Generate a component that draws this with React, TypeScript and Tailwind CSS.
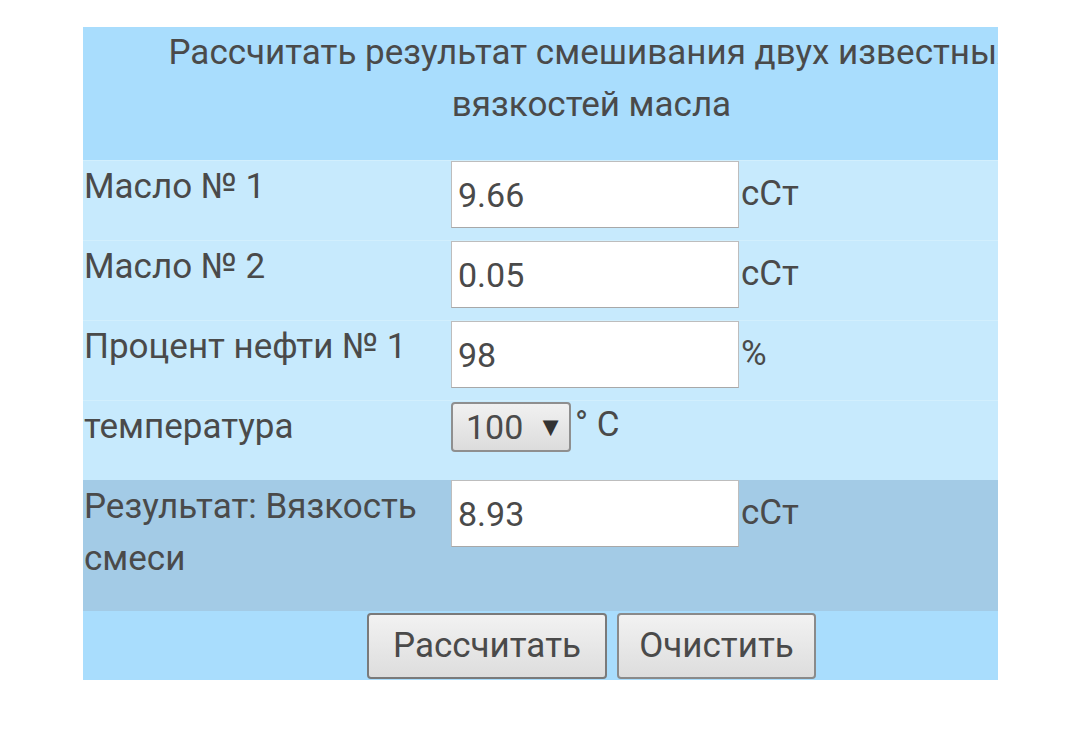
import { useState } from 'react';

const rows = [
  { label: 'Масло № 1', value: '9.66', unit: 'сСт' },
  { label: 'Масло № 2', value: '0.05', unit: 'сСт' },
  { label: 'Процент нефти № 1', value: '98', unit: '%' },
];

const App = () => {
  const [values, setValues] = useState(rows.map((r) => r.value));
  const [result, setResult] = useState('8.93');

  const handleClear = () => {
    setValues(['', '', '']);
    setResult('');
  };

  return (
    <div className="min-h-[730px] bg-white pt-[27px] pl-[83px] text-[#4a4a4a] font-['Roboto','Noto_Sans',sans-serif]">
      <div className="w-[915px] overflow-hidden">
        <div className="w-[1017px]">
          {/* title (wider than the visible box, clipped on the right like the original) */}
          <div className="bg-[#a9ddfd] h-[133px] text-center text-[35px] leading-[52px] whitespace-nowrap">
            Рассчитать результат смешивания двух известных
            <br />
            вязкостей масла
          </div>

          {rows.map((r, i) => (
            <div key={r.label} className="grid grid-cols-[368px_289px_1fr] h-[80px] bg-[#c7eafd] border-t border-[#d2effd] first:border-t-0">
              <div className="text-[35px] leading-[52px] pl-[1px]">{r.label}</div>
              <div>
                <input
                  value={values[i]}
                  onChange={(e) => {
                    const next = [...values];
                    next[i] = e.target.value;
                    setValues(next);
                  }}
                  className="w-[288px] h-[67px] bg-white border border-[#bdbdbd] border-b-[#a8a8a8] px-[6px] text-[34px] text-[#4a4a4a] outline-none"
                />
              </div>
              <div className="text-[35px] leading-[66px] pl-[1px]">{r.unit}</div>
            </div>
          ))}

          <div className="grid grid-cols-[368px_1fr] h-[80px] bg-[#c7eafd] border-t border-[#d2effd]">
            <div className="text-[35px] leading-[52px] pl-[1px]">температура</div>
            <div className="flex items-start gap-[4px] pt-[1px]">
              <div className="w-[120px] h-[50px] rounded-[4px] border-2 border-[#8f8f8f] bg-gradient-to-b from-[#f1f1f1] to-[#dcdcdc] flex items-center pl-[13px] gap-[14px] text-[34px]">
                <span>100</span>
                <span className="text-[27px] leading-none text-[#333]">▼</span>
              </div>
              <div className="text-[35px] leading-[46px]">° C</div>
            </div>
          </div>

          <div className="grid grid-cols-[368px_289px_1fr] h-[131px] bg-[#a3cbe6]">
            <div className="text-[35px] leading-[52px] pl-[1px] pt-[1px]">
              Результат: Вязкость
              <br />
              смеси
            </div>
            <div>
              <input
                value={result}
                readOnly
                className="w-[288px] h-[67px] bg-white border border-[#bdbdbd] border-b-[#a8a8a8] px-[6px] text-[34px] text-[#4a4a4a] outline-none"
              />
            </div>
            <div className="text-[35px] leading-[66px] pl-[1px]">сСт</div>
          </div>

          <div className="bg-[#a9ddfd] h-[69px] flex justify-center items-start gap-[10px] pt-[2px]">
            <button className="w-[240px] h-[66px] rounded-[4px] border-2 border-[#7a7a7a] bg-gradient-to-b from-[#f2f2f2] to-[#dddddd] text-[35px] text-[#4a4a4a]">
              Рассчитать
            </button>
            <button
              onClick={handleClear}
              className="w-[199px] h-[66px] rounded-[4px] border-2 border-[#8a8a8a] bg-gradient-to-b from-[#f2f2f2] to-[#dddddd] text-[35px] text-[#4a4a4a]"
            >
              Очистить
            </button>
          </div>
        </div>
      </div>
    </div>
  );
};

export default App;
